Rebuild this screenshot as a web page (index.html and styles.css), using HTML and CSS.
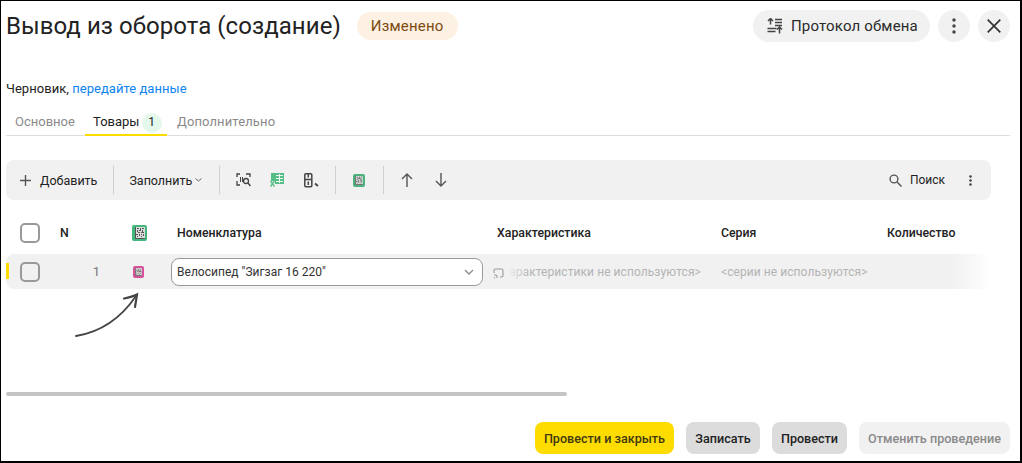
FILE: index.html
```html
<!DOCTYPE html>
<html lang="ru">
<head>
<meta charset="utf-8">
<title>Вывод из оборота</title>
<link rel="stylesheet" href="styles.css">
</head>
<body>
<svg class="defs" width="0" height="0" aria-hidden="true">
  <defs>
    <symbol id="dm" viewBox="0 0 10 12">
      <rect width="10" height="12" fill="#ddd"/>
      <path fill="#555" d="M0 0h1v12H0zM1 11h9v1H1zM2 1h2v1H2zM5 1h1v2H5zM7 1h2v1H7zM2 3h1v2H2zM4 3h2v1H4zM7 3h1v2H7zM3 5h2v1H3zM6 5h3v1H6zM1 7h2v1H1zM4 7h1v2H4zM6 7h1v1H6zM8 7h1v2H8zM2 9h1v1H2zM6 9h1v1H6z"/>
    </symbol>
  </defs>
</svg>
<div class="frame">
  <header class="head">
    <div class="head-left">
      <h1 class="title">Вывод из оборота (создание)</h1>
      <span class="status-pill">Изменено</span>
    </div>
    <div class="head-right">
      <button class="round-btn wide">
        <svg width="16" height="16" viewBox="0 0 16 16"><path d="M3.500 .5v6M1 3l2.500-2.500L6 3M8 1.500h7M8 4.500h7M8 7.500h7M.5 10.500h9M.5 13.500h8M12.500 15.500v-6.500M10 11.500L12.500 9l2.500 2.500" fill="none" stroke="#444" stroke-width="1.500"/></svg>
        <span>Протокол обмена</span>
      </button>
      <button class="round-btn" aria-label="Ещё">
        <svg width="4" height="16" viewBox="0 0 4 16"><circle cx="2" cy="2" r="1.700" fill="#444"/><circle cx="2" cy="8" r="1.700" fill="#444"/><circle cx="2" cy="14" r="1.700" fill="#444"/></svg>
      </button>
      <button class="round-btn" aria-label="Закрыть">
        <svg width="14" height="14" viewBox="0 0 14 14"><path d="M.7.700l12.600 12.600M13.300.700L.7 13.300" stroke="#333" stroke-width="1.700" fill="none"/></svg>
      </button>
    </div>
  </header>

  <p class="note">Черновик, <a class="link">передайте данные</a></p>

  <nav class="tabs">
    <span class="tab">Основное</span>
    <span class="tab active">Товары <span class="count">1</span></span>
    <span class="tab">Дополнительно</span>
  </nav>

  <div class="toolbar">
    <button class="tool add">
      <svg width="11" height="11" viewBox="0 0 11 11"><path d="M5.500 0v11M0 5.500h11" stroke="#555" stroke-width="1.400"/></svg>
      Добавить
    </button>
    <i class="sep"></i>
    <button class="tool fill">Заполнить
      <svg width="7" height="4" viewBox="0 0 7 4"><path d="M.5.500l3 2.500 3-2.500" fill="none" stroke="#666"/></svg>
    </button>
    <i class="sep"></i>
    <span class="ic-btn">
      <svg width="15" height="14" viewBox="0 0 15 14"><path d="M1 4V1h3M10 1h4v3M1 8v4h3" fill="none" stroke="#444" stroke-width="1.300"/><path d="M4.500 4v5M6.500 4v5" stroke="#444"/><circle cx="10" cy="8" r="2.500" fill="none" stroke="#444" stroke-width="1.300"/><path d="M12 10l2.500 3" stroke="#444" stroke-width="1.500"/></svg>
    </span>
    <span class="ic-btn">
      <svg width="14" height="14" viewBox="0 0 14 14"><path d="M1 0h13v11H5V8H1z" fill="#55bd85"/><path d="M6 2.500h7M6 5.500h7M6 8.500h7M9.500 1v9" stroke="#eef8f2"/><path d="M.5 8l4 5.500M4.500 8l-4 5.500" stroke="#55bd85" stroke-width="1.300"/></svg>
    </span>
    <span class="ic-btn">
      <svg width="15" height="15" viewBox="0 0 15 15"><rect x=".8" y=".8" width="7" height="13" rx="1" fill="none" stroke="#444" stroke-width="1.500"/><path d="M1 6.500h7M4.300 1v3.500M4.300 8.500v3.500" stroke="#444" stroke-width="1.500"/><path d="M11 10.500l3 2.500" stroke="#444" stroke-width="1.800"/></svg>
    </span>
    <i class="sep"></i>
    <span class="ic-btn">
      <span class="dm dm-tool"><svg width="8" height="9"><use href="#dm"/></svg></span>
    </span>
    <i class="sep"></i>
    <span class="ic-btn">
      <svg width="12" height="14" viewBox="0 0 12 14"><path d="M6 14V1M1 6l5-5 5 5" fill="none" stroke="#555" stroke-width="1.400"/></svg>
    </span>
    <span class="ic-btn">
      <svg width="12" height="14" viewBox="0 0 12 14"><path d="M6 0v13M1 8l5 5 5-5" fill="none" stroke="#555" stroke-width="1.400"/></svg>
    </span>
    <span class="spacer"></span>
    <button class="tool search">
      <svg width="13" height="13" viewBox="0 0 13 13"><circle cx="5" cy="5" r="3.900" fill="none" stroke="#555" stroke-width="1.400"/><path d="M8 8l4.500 4.500" stroke="#555" stroke-width="1.400"/></svg>
      Поиск
    </button>
    <span class="tool-kebab">
      <svg width="3" height="11" viewBox="0 0 3 11"><circle cx="1.500" cy="1.500" r="1.300" fill="#444"/><circle cx="1.500" cy="5.500" r="1.300" fill="#444"/><circle cx="1.500" cy="9.500" r="1.300" fill="#444"/></svg>
    </span>
  </div>

  <div class="grid grid-head">
    <span class="cell-check"><i class="check"></i></span>
    <span>N</span>
    <span class="cell-dm"><span class="dm dm-green"><svg width="10" height="12"><use href="#dm"/></svg></span></span>
    <span>Номенклатура</span>
    <span>Характеристика</span>
    <span>Серия</span>
    <span>Количество</span>
  </div>

  <div class="grid grid-row">
    <i class="row-mark"></i>
    <span class="cell-check"><i class="check"></i></span>
    <span class="num">1</span>
    <span class="cell-dm"><span class="dm dm-pink"><svg width="7" height="8"><use href="#dm"/></svg></span></span>
    <span class="combo">
      <span>Велосипед "Зигзаг 16 220"</span>
      <svg width="10" height="6" viewBox="0 0 10 6"><path d="M1 1l4 4 4-4" fill="none" stroke="#888" stroke-width="1.300"/></svg>
    </span>
    <span class="muted char">
      &lt;характеристики не используются&gt;
      <span class="char-over">
        <svg width="11" height="11" viewBox="0 0 11 11"><path d="M1 5V2.500Q1 1 2.500 1h6Q10 1 10 2.500v5Q10 9 8.500 9H7M1 7h1.500Q4 7 4 8.500V10M1 9.500l1 .5" fill="none" stroke="#999" stroke-width="1.100"/></svg>
      </span>
    </span>
    <span class="muted">&lt;серии не используются&gt;</span>
    <span></span>
    <i class="row-fade"></i>
  </div>

  <svg class="arrow" width="66" height="46" viewBox="0 0 66 46"><path d="M1 44C26 40 46 26 61 4" fill="none" stroke="#444" stroke-width="1.800" stroke-linecap="round"/><path d="M49 6.500C54 5.500 58 4.500 62 2.500 61.500 7 60.500 11 60 15" fill="none" stroke="#444" stroke-width="2.200" stroke-linecap="round"/></svg>

  <div class="scroll"><i class="thumb"></i></div>

  <footer class="foot">
    <button class="btn primary">Провести и закрыть</button>
    <button class="btn save">Записать</button>
    <button class="btn post">Провести</button>
    <button class="btn disabled">Отменить проведение</button>
  </footer>
</div>
</body>
</html>
```
FILE: styles.css
```css
* { box-sizing: border-box; }
html, body { margin: 0; padding: 0; background: #fff; }
body { font-family: Roboto, "Noto Sans", sans-serif; color: #222; overflow: hidden; }
.defs { position: absolute; }
button { font: inherit; border: 0; color: inherit; background: none; padding: 0; }

.frame {
  position: relative;
  width: 1022px;
  height: 463px;
  border: solid #000;
  border-width: 1px 2px 2px 1px;
  padding: 9px 10px 0 5px;
  overflow: hidden;
}

.head { display: flex; justify-content: space-between; align-items: center; height: 32px; }
.head-left { display: flex; align-items: center; gap: 16px; }
.title { margin: 0; font-size: 24px; font-weight: 400; line-height: 32px; color: #222; letter-spacing: .05px; }
.status-pill {
  height: 28px; width: 101px; line-height: 28px; padding: 0 14px; border-radius: 14px;
  background: #fdf1e3; color: #7d4a0e; font-size: 15px; letter-spacing: .18px; white-space: nowrap;
}
.head-right { display: flex; gap: 8px; }
.round-btn {
  width: 32px; height: 32px; border-radius: 16px; background: #f1f1f1;
  display: flex; align-items: center; justify-content: center;
}
.round-btn.wide { width: 177px; gap: 8px; padding-left: 14px; justify-content: flex-start; font-size: 15px; letter-spacing: .17px; color: #2a2a2a; }

.note { margin: 38px 0 0; font-size: 13px; line-height: 18px; color: #222; letter-spacing: .04px; }
.link { color: #0d84f0; }

.tabs {
  display: flex; align-items: stretch; height: 29px; margin-top: 9px;
  border-bottom: 1px solid #ddd; font-size: 13px; color: #8a8a8a; line-height: 30px;
}
.tab { padding: 0 10px; white-space: nowrap; margin-bottom: -1px; letter-spacing: .12px; }
.tab:first-child { letter-spacing: 0; padding: 0 9px 0 9px; width: 79px; }
.tab.active { color: #222; border-bottom: 2px solid #ffdc00; padding: 0 0 0 8px; width: 82px; letter-spacing: 0; }
.count {
  display: inline-block; width: 20px; height: 20px; line-height: 18px; border-radius: 50%;
  background: #e4f9ec; text-align: center; font-size: 12px; margin-left: -1px; vertical-align: 0; color: #222;
}

.toolbar {
  display: flex; align-items: center; width: 985px; height: 40px; margin-top: 24px;
  background: #f1f1f1; border-radius: 8px; font-size: 12.500px; color: #222;
}
.tool { display: flex; align-items: center; white-space: nowrap; }
.add { gap: 9px; padding: 0 16px 0 14px; }
.fill { gap: 3px; padding: 0 17px 0 15px; }
.sep { width: 1px; height: 28px; background: #cfcfcf; flex: none; }
.ic-btn { width: 34px; display: flex; justify-content: center; align-items: center; }
.sep + .ic-btn { margin-left: 6px; }
.ic-btn + .sep { margin-left: 7px; }
.spacer { flex: 1; }
.search { gap: 8px; padding-right: 24px; font-size: 12px; }
.tool-kebab { display: flex; padding-right: 19px; }

.dm { display: inline-flex; align-items: center; justify-content: center; border-radius: 2px; line-height: 0; }
.dm-tool { width: 12px; height: 13px; background: #4cb27b; }
.dm-green { width: 15px; height: 16px; background: #44b87c; }
.dm-pink { width: 11px; height: 12px; background: #d7519b; }

.grid {
  display: grid;
  grid-template-columns: 54px 72px 45px 320px 224px 166px 1fr;
  align-items: center;
  width: 985px;
  font-size: 13px;
}
.grid-head { height: 32px; margin-top: 17px; font-weight: 500; font-size: 12.300px; color: #222; }
.grid-row {
  position: relative; height: 35px; margin-top: 5px; border-radius: 8px 0 0 8px;
  background: #f1f1f1;
}
.cell-check { display: flex; padding-left: 14px; }
.check { display: block; width: 20px; height: 20px; border: 2px solid #999; border-radius: 5px; }
.cell-dm { display: flex; }
.grid-row .cell-dm { padding-left: 1px; }
.num { text-align: right; padding-right: 32px; color: #777; }
.combo {
  display: flex; align-items: center; justify-content: space-between;
  height: 28px; width: 312px; margin-left: -6px; padding: 0 8px 0 5px;
  background: #fff; border: 1px solid #9a9a9a; border-radius: 8px; font-size: 12px; letter-spacing: .02px; color: #333;
}
.muted { font-size: 12px; color: #b4b4b4; white-space: nowrap; letter-spacing: .07px; }
.char { position: relative; }
.char-over {
  position: absolute; left: -4px; top: -3px; width: 36px; height: 24px;
  display: flex; align-items: center;
  background: linear-gradient(to right, #f1f1f1 40%, rgba(241,241,241,0));
}
.row-mark {
  position: absolute; left: 0; top: 9px; width: 3px; height: 16px; background: #ffdc00;
}
.row-fade {
  position: absolute; right: 0; top: 0; bottom: 0; width: 40px;
  background: linear-gradient(to right, rgba(255,255,255,0), #fff);
}

.arrow { position: absolute; left: 74px; top: 291px; }

.scroll { height: 4px; width: 985px; margin-top: 103px; }
.thumb { display: block; width: 561px; height: 4px; background: #c4c4c4; border-radius: 2px; }

.foot { display: flex; justify-content: flex-end; gap: 12px; margin-top: 26px; }
.btn {
  height: 32px; padding: 0 9px; border-radius: 8px; background: #dcdcdc;
  font-size: 12.600px; font-weight: 500; color: #222; white-space: nowrap;
}
.btn.primary { background: #ffdc00; color: #3f3a10; width: 139px; padding: 0; }
.btn.save { width: 74px; padding: 0; }
.btn.post { width: 75px; padding: 0; }
.btn.disabled { background: #f1f1f1; color: #8a8a8a; width: 151px; padding: 0; }
```
